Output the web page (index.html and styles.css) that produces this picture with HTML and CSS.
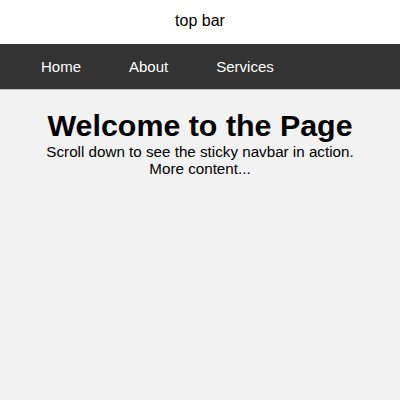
FILE: index.html
```html
<!DOCTYPE html>
<html>
<head>
<meta charset="utf-8">
<link rel="stylesheet" href="styles.css">
</head>
<body>
<div class="top-bar">top bar</div>
<nav class="navbar">
  <a href="#">Home</a>
  <a href="#">About</a>
  <a href="#">Services</a>
</nav>
<main class="content">
  <h1>Welcome to the Page</h1>
  <p>Scroll down to see the sticky navbar in action.</p>
  <p>More content...</p>
</main>
</body>
</html>
```
FILE: styles.css
```css
html, body {
  margin: 0;
  padding: 0;
  height: 100%;
}
body {
  font-family: "Liberation Sans", Arial, sans-serif;
  font-size: 15.2px;
  background: #f2f2f2;
  color: #000;
}
.top-bar {
  background: #fff;
  text-align: center;
  font-size: 16px;
  height: 20px;
  padding: 12px 0;
}
.navbar {
  background: #333;
  display: flex;
  padding: 0 17px;
  box-shadow: 0 1px 0 #c4c4c4;
  position: relative;
}
.navbar a {
  color: #fff;
  text-decoration: none;
  font-size: 15px;
  padding: 14px 24px;
}
.content {
  text-align: center;
  padding: 19px 20px;
}
.content h1 {
  font-size: 30.4px;
  margin: 0;
}
.content p {
  font-size: 15.2px;
  margin: 0;
}
```
